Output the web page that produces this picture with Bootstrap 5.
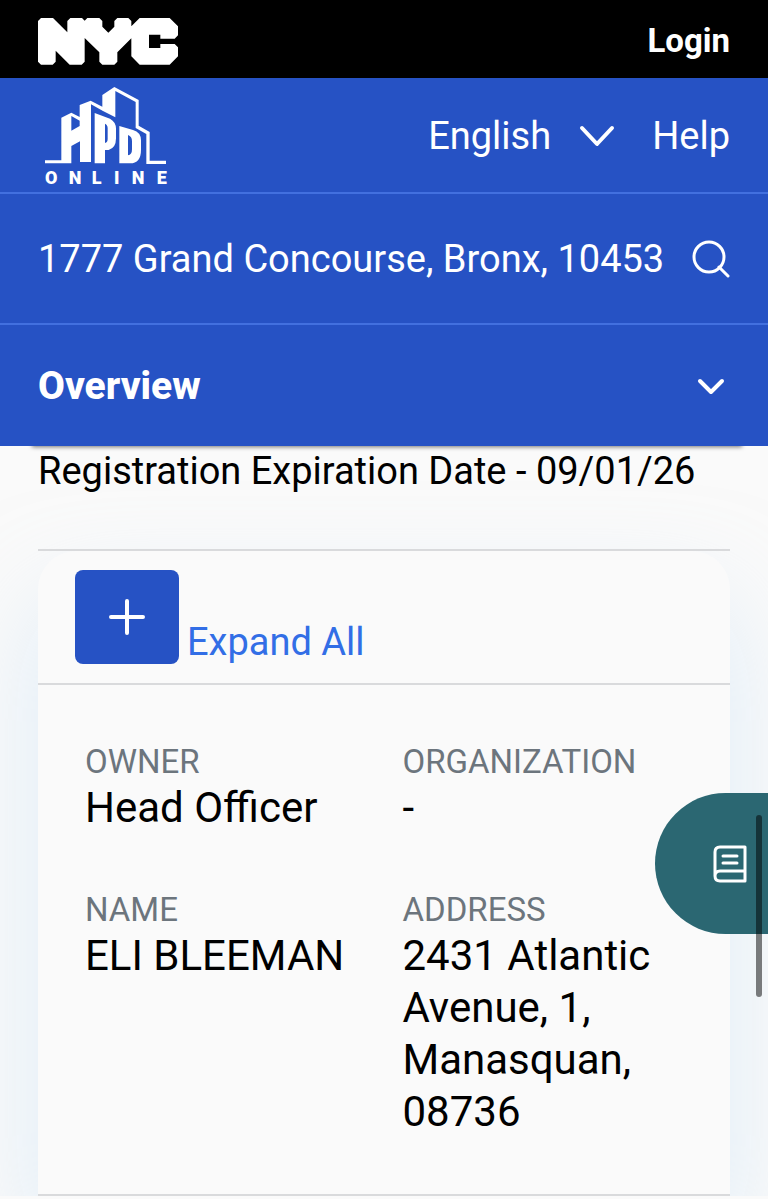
<!DOCTYPE html>
<html lang="en">
<head>
<meta charset="utf-8">
<meta name="viewport" content="width=device-width, initial-scale=1">
<title>HPD Online</title>
<link href="https://cdn.jsdelivr.net/npm/bootstrap@5.3.0/dist/css/bootstrap.min.css" rel="stylesheet">
<style>
  html { scrollbar-width: none; }
  html::-webkit-scrollbar { display: none; }
  body { font-family: Roboto, "Liberation Sans", sans-serif; background: #fafafa; color: #000; overflow-x: hidden; }
  svg { display: block; flex: none; }
  .gutter { padding-left: 38px; padding-right: 38px; }
  .city-bar { background: #000; height: 78px; padding-top: 4px; }
  .login-link { font-size: 33px; font-weight: 700; }
  .site-head { background: #2652c4; color: #fff; position: relative; z-index: 2; }
  .site-head::after { content: ""; position: absolute; z-index: -1; left: 32px; right: 26px; bottom: 0; height: 12px; box-shadow: 0 1px 4px #0008; }
  .head-row { background: #2652c4; border-bottom: 2px solid #4270df; }
  .brand-row { height: 116px; padding-top: 2px; }
  .search-row { height: 131px; }
  .section-row { height: 121px; border-bottom: 0; }
  .head-text { font-size: 38px; line-height: 48px; color: #fff; }
  .section-title { font-size: 39px; font-weight: 800; }
  .lang-select { appearance: none; background: none; border: 0; padding: 0; width: 122px; }
  .lang-arrow { margin: 0 32px 0 24px; }
  .search-box { background: none; border: 0; padding: 0; min-width: 0; }
  .plain-btn { background: none; border: 0; padding: 0; color: #fff; }
  .reg-date { font-size: 38px; line-height: 50px; padding-bottom: 53px; }
  .rule-line { height: 2px; background: #d9dadc; }
  .top-rule { margin: 0 38px; position: relative; z-index: 1; }
  .owner-card { margin: 0 38px; border-radius: 38px 38px 0 0; background: #fafafa; box-shadow: 0 50px 100px #c4e0f880; }
  .expand-row { height: 132px; padding: 19px 37px; }
  .plus-btn { width: 104px; height: 94px; border-radius: 8px; background: #2652c4; border: 0; }
  .expand-link { font-size: 38px; line-height: 44px; color: #326ee6; }
  .owner-fields { padding: 57px 26px 0 47px; min-height: 509px; }
  .field-label { font-size: 33px; line-height: 40px; font-weight: 400; color: #6c757d; }
  .field-value { font-size: 42px; line-height: 52px; margin: 0 0 56px; }
  .guide-tab { position: fixed; right: 0; top: 793px; width: 113px; height: 141px; border-radius: 71px 0 0 71px; background: #2b6772; z-index: 3; padding-left: 37px; }
  .scroll-thumb { position: fixed; right: 6px; top: 815px; width: 6px; height: 182px; border-radius: 3px; background: #00000080; z-index: 4; }
</style>
</head>
<body>
<div class="city-bar gutter d-flex align-items-center justify-content-between">
  <a href="#" aria-label="NYC">
    <svg width="140" height="47" viewBox="54 53 420 141" fill="#fff" aria-hidden="true">
      <path fill-rule="evenodd" d="M63 53H99L142 96V62L151 53H186L194 61L202 53H238L247 62V79L265 97L283 79V62L292 53H325L334 62V78L359 53H449L474 78V105L464 115H421V103H387V143H421V131H464L474 141V168L449 193H359L334 168V114L292 156V184L283 193H247L238 184V156L194 113V184L185 193H149L107 151V184L98 193H63L54 184V62Z"/>
    </svg>
  </a>
  <a href="#" class="login-link text-white text-decoration-none">Login</a>
</div>

<header class="site-head">
  <div class="head-row brand-row gutter d-flex align-items-center justify-content-between">
    <a href="#" class="ms-2" aria-label="HPD Online">
      <svg width="122" height="98" viewBox="48 33 366 294" fill="#fff" aria-hidden="true" overflow="visible">
        <path d="M45 253H94V125L124 110L149 123V87L182 74L217 92V57L253 33L326 72V149L359 168V254H408V264H349V174L317 156V78L256 45V124L219 105L183 85V258H150V196L124 210V262H45ZM124 120V164L149 150V134Z" fill-rule="evenodd"/>
        <path fill-rule="evenodd" d="M194 111L240 128Q258 138 258 158V187Q258 216 236 222H225V262H194ZM225 143V201Q233 199 233 189V157Q233 146 225 143Z"/>
        <path fill-rule="evenodd" d="M268 150L309 162Q333 169 333 193V221Q333 262 300 262H268ZM294 177V238Q306 237 306 220V196Q306 181 294 177Z"/>
        <text x="45 116 185 252 305 380" y="323" font-family="Roboto, sans-serif" font-size="54" font-weight="900">ONLINE</text>
      </svg>
    </a>
    <nav class="d-flex align-items-center">
      <select class="lang-select head-text" aria-label="Language"><option>English</option></select>
      <svg class="lang-arrow" width="46" height="34" viewBox="0 0 46 34" fill="none" stroke="#fff" stroke-width="4" stroke-linecap="round" stroke-linejoin="round" aria-hidden="true"><path d="M8 9L23 25L38 9"/></svg>
      <a href="#" class="head-text text-decoration-none">Help</a>
    </nav>
  </div>
  <form class="head-row search-row gutter d-flex align-items-center">
    <input class="search-box head-text flex-grow-1" type="text" value="1777 Grand Concourse, Bronx, 10453" aria-label="Address">
    <button type="button" class="plain-btn" aria-label="Search">
      <svg width="38" height="38" viewBox="0 0 38 38" fill="none" stroke="#fff" stroke-width="3" stroke-linecap="round"><circle cx="17" cy="17" r="15"/><path d="M27 27L36 36"/></svg>
    </button>
  </form>
  <div class="head-row section-row gutter d-flex">
    <button type="button" class="plain-btn head-text section-title w-100 d-flex align-items-center justify-content-between">
      Overview
      <svg class="me-1" width="30" height="20" viewBox="0 0 30 20" fill="none" stroke="#fff" stroke-width="4" stroke-linecap="round" stroke-linejoin="round" aria-hidden="true"><path d="M4 5L15 16L26 5"/></svg>
    </button>
  </div>
</header>

<main>
  <div class="reg-date gutter">Registration Expiration Date - 09/01/26</div>
  <div class="rule-line top-rule"></div>
  <section class="owner-card">
    <div class="expand-row d-flex align-items-end">
      <button type="button" class="plus-btn d-flex align-items-center justify-content-center" aria-label="Expand">
        <svg width="38" height="38" viewBox="0 0 38 38" stroke="#fff" stroke-width="4" stroke-linecap="round"><path d="M19 3V35M3 19H35"/></svg>
      </button>
      <a href="#" class="expand-link text-decoration-none ms-2">Expand All</a>
    </div>
    <div class="rule-line"></div>
    <dl class="owner-fields row gx-0 mb-0 align-content-start">
      <div class="col-6"><dt class="field-label">OWNER</dt><dd class="field-value">Head Officer</dd></div>
      <div class="col-6 ps-2"><dt class="field-label">ORGANIZATION</dt><dd class="field-value">-</dd></div>
      <div class="col-6"><dt class="field-label">NAME</dt><dd class="field-value">ELI BLEEMAN</dd></div>
      <div class="col-6 ps-2"><dt class="field-label">ADDRESS</dt><dd class="field-value">2431 Atlantic Avenue, 1, Manasquan, 08736</dd></div>
    </dl>
    <div class="rule-line"></div>
  </section>
</main>

<button type="button" class="guide-tab plain-btn d-flex align-items-center justify-content-center" aria-label="Guide">
  <svg width="34" height="38" viewBox="0 0 34 38" fill="none" stroke="#fff" stroke-width="3" stroke-linecap="round" stroke-linejoin="round"><path d="M32 2H7Q2 2 2 7V31Q2 36 7 36H32ZM32 26H7Q2 26 2 31M10 11H24M10 18H24"/></svg>
</button>
<div class="scroll-thumb"></div>
<script src="https://cdn.jsdelivr.net/npm/bootstrap@5.3.0/dist/js/bootstrap.bundle.min.js"></script>
</body>
</html>
